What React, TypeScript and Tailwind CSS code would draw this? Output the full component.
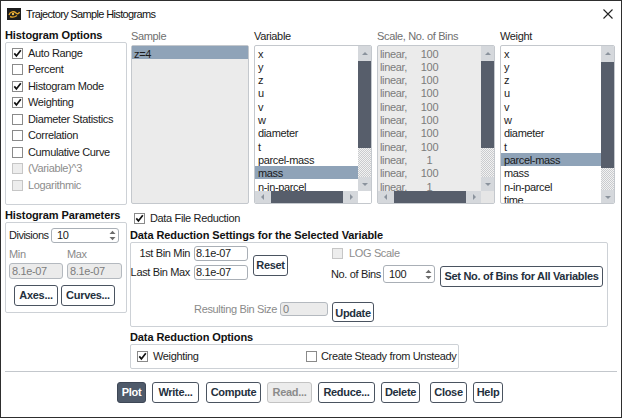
import React from "react";

const Check = ({ checked = false, disabled = false }: { checked?: boolean; disabled?: boolean }) => (
  <span
    className={
      disabled
        ? "w-[11px] h-[11px] border border-[#c6c6c6] bg-[#ededed] flex items-center justify-center shrink-0"
        : "w-[11px] h-[11px] border border-[#8a8a8a] bg-white flex items-center justify-center shrink-0"
    }
  >
    {checked && (
      <svg width="9" height="9" viewBox="0 0 9 9">
        <path d="M1.3 4.4 L3.4 6.9 L7.8 1.2" fill="none" stroke="#111" strokeWidth="1.7" />
      </svg>
    )}
  </span>
);

const UpDown = () => (
  <svg width="7" height="11" viewBox="0 0 7 11" className="shrink-0">
    <path d="M0.5 4 L3.5 0.8 L6.5 4 Z" fill="#6b6b6b" />
    <path d="M0.5 7 L3.5 10.2 L6.5 7 Z" fill="#6b6b6b" />
  </svg>
);

const Tri = ({ dir }: { dir: "up" | "down" | "left" | "right" }) => {
  const d =
    dir === "up"
      ? "M1 5 L4 2 L7 5 Z"
      : dir === "down"
      ? "M1 3 L4 6 L7 3 Z"
      : dir === "left"
      ? "M5 1 L2 4 L5 7 Z"
      : "M3 1 L6 4 L3 7 Z";
  return (
    <svg width="8" height="8" viewBox="0 0 8 8">
      <path d={d} fill="#8b939d" />
    </svg>
  );
};

const Dotted = ({ className }: { className: string }) => (
  <div
    className={
      className +
      " bg-[repeating-conic-gradient(#c9cbce_0%_25%,#f2f2f2_0%_50%)] bg-[length:2px_2px]"
    }
  />
);

const VScroll = ({ up, thumb, dots, down }: { up: string; thumb: string; dots: string; down: string }) => (
  <div className="w-[13px] flex flex-col shrink-0">
    <div className={up + " bg-[#d5d8dc] flex items-center justify-center"}>
      <Tri dir="up" />
    </div>
    <div className={thumb + " bg-[#575e6b]"} />
    <Dotted className={dots} />
    <div className={down + " bg-[#d5d8dc] flex items-center justify-center"}>
      <Tri dir="down" />
    </div>
  </div>
);

const HScroll = ({ corner }: { corner: string }) => (
  <div className="h-[12px] flex shrink-0">
    <div className="w-[16px] bg-[#d5d8dc] flex items-center justify-center">
      <Tri dir="left" />
    </div>
    <div className="w-[72px] bg-[#575e6b]" />
    <div className="w-[15px] bg-[#d5d8dc] flex items-center justify-center">
      <Tri dir="right" />
    </div>
    <div className={corner + " w-[13px]"} />
  </div>
);

const Btn = ({
  children,
  w,
  h = "h-[21px]",
  kind = "normal",
}: {
  children: React.ReactNode;
  w: string;
  h?: string;
  kind?: "normal" | "primary" | "disabled";
}) => {
  const base =
    w +
    " " +
    h +
    " rounded-[3px] flex items-center justify-center font-bold text-[11px] tracking-[-0.3px] whitespace-nowrap shrink-0 ";
  const k =
    kind === "primary"
      ? "bg-[#4f5a6a] border border-[#3e4756] text-white"
      : kind === "disabled"
      ? "bg-[#ececec] border border-[#c3c3c3] text-[#8b8b8b]"
      : "bg-white border border-[#4a5360] text-[#24303d]";
  return <div className={base + k}>{children}</div>;
};

const Row = ({ children, sel = false }: { children: React.ReactNode; sel?: boolean }) => (
  <div
    className={
      sel
        ? "h-[13.33px] leading-[12px] pt-[1.5px] pl-[3px] bg-[#8fa3b8] text-[#1a1a1a] whitespace-nowrap"
        : "h-[13.33px] leading-[12px] pt-[1.5px] pl-[3px] whitespace-nowrap"
    }
  >
    {children}
  </div>
);

const variables = ["x", "y", "z", "u", "v", "w", "diameter", "t", "parcel-mass", "mass", "n-in-parcel"];
const scales = ["100", "100", "100", "100", "100", "100", "100", "100", "1", "100", "1"];
const weights = ["x", "y", "z", "u", "v", "w", "diameter", "t", "parcel-mass", "mass", "n-in-parcel", "time"];

export default function App() {
  return (
    <div className="w-[622px] h-[418px] bg-white border border-[#2e2e2e] flex flex-col overflow-hidden text-[11px] tracking-[-0.35px] text-[#1c1c1c] font-['Liberation_Sans',Arial,sans-serif] leading-none">
      {/* Title bar */}
      <div className="h-[26px] flex items-center shrink-0 pl-[6px] pr-[8px]">
        <svg width="14" height="12" viewBox="0 0 14 12" className="shrink-0">
          <rect x="0" y="0" width="14" height="12" fill="#1d1d1d" />
          <path d="M2 7 C3 3.5 7 3 9 5 C10.5 6.5 12 5.5 12.5 4 M3 8.5 C5 9.5 8 9 10 7.5" fill="none" stroke="#e2a42b" strokeWidth="1.4" />
          <circle cx="6" cy="6" r="1.2" fill="#f3c04a" />
        </svg>
        <span className="ml-[5px] text-[11px] text-[#111] tracking-[-0.65px]">
          Trajectory Sample Histograms
        </span>
        <div className="flex-1" />
        <svg width="10" height="10" viewBox="0 0 10 10" className="mt-[-1px]">
          <path d="M0.5 0.5 L9.5 9.5 M9.5 0.5 L0.5 9.5" stroke="#222" strokeWidth="1.1" />
        </svg>
      </div>

      {/* Body */}
      <div className="flex pl-[4px]">
        {/* Left column */}
        <div className="w-[122px] flex flex-col shrink-0">
          <div className="h-[15px] leading-[15px] font-bold text-[#111] tracking-[-0.1px] pt-[1px]">Histogram Options</div>
          <div className="h-[163px] border border-[#cdd1d6] rounded-[2px] pl-[6px] pt-[2px] flex flex-col">
            {[
              ["Auto Range", true, false],
              ["Percent", false, false],
              ["Histogram Mode", true, false],
              ["Weighting", true, false],
              ["Diameter Statistics", false, false],
              ["Correlation", false, false],
              ["Cumulative Curve", false, false],
              ["(Variable)^3", false, true],
              ["Logarithmic", false, true],
            ].map(([label, c, d]) => (
              <div key={label as string} className="h-[16.5px] flex items-center gap-[5px]">
                <Check checked={c as boolean} disabled={d as boolean} />
                <span className={d ? "text-[#8d8d8d] whitespace-nowrap" : "whitespace-nowrap"}>{label as string}</span>
              </div>
            ))}
          </div>

          <div className="h-[17px] pt-[4px] leading-[13px] font-bold text-[#111] tracking-[-0.1px] whitespace-nowrap">Histogram Parameters</div>
          <div className="h-[91px] border border-[#cdd1d6] rounded-[2px] flex flex-col pl-[3px] pt-[5px]">
            <div className="flex items-center h-[15px]">
              <span className="w-[42px] tracking-[-0.5px]">Divisions</span>
              <div className="w-[68px] h-[15px] border border-[#a9afb6] rounded-[3px] bg-white flex items-center pl-[5px] pr-[2px]">
                <span className="flex-1">10</span>
                <UpDown />
              </div>
            </div>
            <div className="flex h-[14px] mt-[4px] items-center text-[#8a8a8a]">
              <span className="w-[58px]">Min</span>
              <span>Max</span>
            </div>
            <div className="flex mt-[2px] gap-[4px]">
              <div className="w-[54px] h-[16px] border border-[#b4b9bf] rounded-[3px] bg-[#ebebeb] text-[#7d7d7d] flex items-center pl-[2px]">8.1e-07</div>
              <div className="w-[55px] h-[16px] border border-[#b4b9bf] rounded-[3px] bg-[#ebebeb] text-[#7d7d7d] flex items-center pl-[2px]">8.1e-07</div>
            </div>
            <div className="flex mt-[6px] ml-[5px] gap-[3px]">
              <Btn w="w-[44px]">Axes...</Btn>
              <Btn w="w-[54px]">Curves...</Btn>
            </div>
          </div>
        </div>

        {/* Right column */}
        <div className="ml-[3px] flex flex-col w-[486px]">
          {/* Lists */}
          <div className="flex gap-[5px] pl-[1px]">
            {/* Sample */}
            <div className="w-[118px] flex flex-col">
              <div className="h-[18px] pt-[4px] text-[#6f6f6f]">Sample</div>
              <div className="h-[159px] border border-[#c4c8cd] bg-[#ebebeb] rounded-[2px]">
                <div className="h-[13.33px] leading-[12px] pt-[1.5px] pl-[2px] bg-[#8fa3b8]">z=4</div>
              </div>
            </div>
            {/* Variable */}
            <div className="w-[118px] flex flex-col">
              <div className="h-[18px] pt-[4px] text-[#1c1c1c]">Variable</div>
              <div className="h-[159px] border border-[#c4c8cd] bg-white rounded-[2px] flex flex-col overflow-hidden">
                <div className="flex h-[145px]">
                  <div className="flex-1 overflow-hidden">
                    {variables.map((v, i) => (
                      <Row key={v} sel={i === 9}>
                        {v}
                      </Row>
                    ))}
                  </div>
                  <VScroll up="h-[15px]" thumb="h-[87px]" dots="h-[29px]" down="h-[14px]" />
                </div>
                <HScroll corner="bg-white" />
              </div>
            </div>
            {/* Scale */}
            <div className="w-[118px] flex flex-col">
              <div className="h-[18px] pt-[4px] text-[#6f6f6f] whitespace-nowrap">Scale, No. of Bins</div>
              <div className="h-[159px] border border-[#c4c8cd] bg-[#ebebeb] rounded-[2px] flex flex-col overflow-hidden text-[#7b7b7b]">
                <div className="flex h-[145px]">
                  <div className="flex-1 overflow-hidden">
                    {scales.map((s, i) => (
                      <div key={i} className="h-[13.33px] leading-[12px] pt-[1.5px] pl-[2px] flex whitespace-nowrap">
                        <span className="w-[36px]">linear,</span>
                        <span className="w-[27px] text-center">{s}</span>
                      </div>
                    ))}
                  </div>
                  <VScroll up="h-[15px]" thumb="h-[87px]" dots="h-[29px]" down="h-[14px]" />
                </div>
                <HScroll corner="bg-[#e6e6e6]" />
              </div>
            </div>
            {/* Weight */}
            <div className="w-[115px] flex flex-col">
              <div className="h-[18px] pt-[4px] text-[#1c1c1c]">Weight</div>
              <div className="h-[159px] border border-[#c4c8cd] bg-white rounded-[2px] flex overflow-hidden">
                <div className="flex-1 overflow-hidden">
                  {weights.map((v, i) => (
                    <Row key={v} sel={i === 8}>
                      {v}
                    </Row>
                  ))}
                </div>
                <VScroll up="h-[16px]" thumb="h-[106px]" dots="h-[22px]" down="h-[13px]" />
              </div>
            </div>
          </div>

          {/* Data File Reduction */}
          <div className="mt-[7px] h-[14px] flex items-center gap-[5px] pl-[4px]">
            <Check checked />
            <span>Data File Reduction</span>
          </div>

          <div className="mt-[3px] h-[14px] leading-[14px] font-bold text-[#111] tracking-[-0.1px] whitespace-nowrap">
            Data Reduction Settings for the Selected Variable
          </div>
          <div className="w-[478px] h-[85px] border border-[#cdd1d6] rounded-[2px] flex flex-col">
            <div className="flex pt-[3px]">
              {/* left block */}
              <div className="flex flex-col pl-[3px] gap-[4px]">
                <div className="flex h-[15px] items-center">
                  <span className="w-[56px] flex justify-end whitespace-nowrap">1st Bin Min</span>
                  <div className="ml-[4px] w-[54px] h-[15px] border border-[#a9afb6] rounded-[3px] bg-white flex items-center pl-[1px]">8.1e-07</div>
                </div>
                <div className="flex h-[15px] items-center">
                  <span className="w-[56px] flex justify-end whitespace-nowrap">Last Bin Max</span>
                  <div className="ml-[4px] w-[54px] h-[15px] border border-[#a9afb6] rounded-[3px] bg-white flex items-center pl-[1px]">8.1e-07</div>
                </div>
              </div>
              <div className="ml-[5px] mt-[9px]">
                <Btn w="w-[35px]">Reset</Btn>
              </div>
              {/* right block */}
              <div className="ml-[43px] flex flex-col">
                <div className="h-[14px] flex items-center gap-[6px] pl-[1px]">
                  <Check disabled />
                  <span className="text-[#8d8d8d]">LOG Scale</span>
                </div>
                <div className="flex mt-[5px] items-start">
                  <span className="h-[18px] flex items-center w-[52px] whitespace-nowrap">No. of Bins</span>
                  <div className="w-[52px] h-[18px] border border-[#a9afb6] rounded-[3px] bg-white flex items-center pl-[5px] pr-[2px]">
                    <span className="flex-1">100</span>
                    <UpDown />
                  </div>
                  <div className="ml-[5px] mt-[1px]">
                    <Btn w="w-[163px]">Set No. of Bins for All Variables</Btn>
                  </div>
                </div>
              </div>
            </div>
            <div className="flex mt-[15px] ml-[67px] items-start">
              <span className="h-[14px] flex items-center justify-end pr-[3px] w-[82px] text-[#8a8a8a] whitespace-nowrap">Resulting Bin Size</span>
              <div className="w-[48px] h-[14px] border border-[#b4b9bf] rounded-[3px] bg-[#ebebeb] text-[#7d7d7d] flex items-center pl-[2px]">0</div>
              <div className="ml-[4px]">
                <Btn w="w-[42px]" h="h-[20px]">
                  <span className="pt-[2px]">Update</span>
                </Btn>
              </div>
            </div>
          </div>

          <div className="mt-[3px] h-[14px] leading-[14px] font-bold text-[#111] tracking-[-0.1px]">Data Reduction Options</div>
          <div className="w-[329px] h-[25px] border border-[#cdd1d6] rounded-[2px] flex items-center pl-[6px]">
            <div className="w-[169px] flex items-center">
              <Check checked />
              <span className="ml-[5px]">Weighting</span>
            </div>
            <Check />
            <span className="ml-[4px] whitespace-nowrap">Create Steady from Unsteady</span>
          </div>
        </div>
      </div>

      {/* Separator */}
      <div className="mx-[4px] mt-[2px] h-px bg-[#c3c7cc]" />

      {/* Buttons */}
      <div className="flex mt-[10px] pl-[116px]">
        <Btn w="w-[29px]" kind="primary">Plot</Btn>
        <div className="ml-[6px]"><Btn w="w-[47px]">Write...</Btn></div>
        <div className="ml-[7px]"><Btn w="w-[55px]">Compute</Btn></div>
        <div className="ml-[6px]"><Btn w="w-[45px]" kind="disabled">Read...</Btn></div>
        <div className="ml-[6px]"><Btn w="w-[57px]">Reduce...</Btn></div>
        <div className="ml-[6px]"><Btn w="w-[39px]">Delete</Btn></div>
        <div className="ml-[10px]"><Btn w="w-[37px]">Close</Btn></div>
        <div className="ml-[6px]"><Btn w="w-[30px]">Help</Btn></div>
      </div>
    </div>
  );
}
